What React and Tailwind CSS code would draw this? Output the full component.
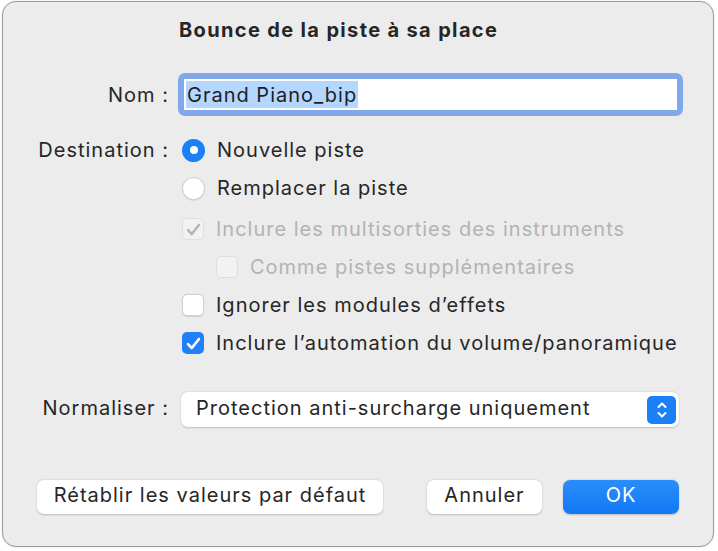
import React from "react";

const font = { fontFamily: "Inter, 'Liberation Sans', sans-serif" };

const Radio = ({ checked }) =>
  checked ? (
    <span className="flex h-[23px] w-[23px] shrink-0 items-center justify-center rounded-full bg-[#1b7ff6]">
      <span className="h-[8px] w-[8px] rounded-full bg-white" />
    </span>
  ) : (
    <span className="h-[23px] w-[23px] shrink-0 rounded-full border border-[#cfcfcf] bg-white shadow-[0_0.5px_1px_rgba(0,0,0,0.12)]" />
  );

const Check = ({ color }) => (
  <svg width="15" height="13" viewBox="0 0 15 13" fill="none">
    <path d="M2 7.2 L5.8 11 L13 2" stroke={color} strokeWidth="2.6" strokeLinecap="round" strokeLinejoin="round" />
  </svg>
);

const Checkbox = ({ checked, disabled }) => {
  if (checked && !disabled)
    return (
      <span className="flex h-[22px] w-[22px] shrink-0 items-center justify-center rounded-[5px] bg-[#1f80f7]">
        <Check color="#fff" />
      </span>
    );
  if (disabled)
    return (
      <span className="flex h-[22px] w-[22px] shrink-0 items-center justify-center rounded-[5px] border border-[#dedede] bg-[#f2f2f2]">
        {checked ? <Check color="#b5b5b5" /> : null}
      </span>
    );
  return <span className="h-[22px] w-[22px] shrink-0 rounded-[5px] border border-[#cfcfcf] bg-white shadow-[0_0.5px_1px_rgba(0,0,0,0.12)]" />;
};

const Option = ({ control, label, disabled, indent }) => (
  <div className={`flex h-[38px] items-center gap-[12px] ${indent ? "pl-[48px]" : "pl-[14px]"}`}>
    {control}
    <span className={`text-[20px] leading-none ${disabled ? "text-[#b3b3b3]" : "text-[#262626]"}`}>{label}</span>
  </div>
);

export default function App() {
  return (
    <div className="h-[551px] w-[718px] bg-white pl-[2px] pt-[1px] tracking-[1px]" style={font}>
      <div className="flex h-[546px] w-[712px] flex-col rounded-[14px] border border-[#9c9c9c] bg-[#ececec] shadow-[0_0_2px_rgba(0,0,0,0.15)]">
        <h1 className="pl-[176px] pt-[16px] text-[20px] font-bold leading-[24px] tracking-[1.35px] text-[#262626]">
          Bounce de la piste à sa place
        </h1>

        <div className="mt-[31px] flex items-center">
          <span className="w-[166px] text-right text-[20px] text-[#262626]">Nom :</span>
          <div className="ml-[9px] w-[505px] rounded-[7px] bg-[#82a8ec] p-[6px]">
            <div className="flex h-[31px] items-center bg-white pl-[2px]">
              <span className="flex h-[27px] items-center bg-[#b3d7ff] pl-[1px] pr-[1px] text-[20px] text-[#1e1e1e]">
                Grand Piano_bip
              </span>
            </div>
          </div>
        </div>

        <div className="mt-[15px] flex">
          <span className="flex h-[38px] w-[166px] items-center justify-end text-[20px] text-[#262626]">
            Destination :
          </span>
          <div className="-ml-[1px] flex flex-col">
            <Option control={<Radio checked />} label="Nouvelle piste" />
            <Option control={<Radio />} label="Remplacer la piste" />
            <div className="mt-[3px]">
              <Option control={<Checkbox checked disabled />} label="Inclure les multisorties des instruments" disabled />
              <Option control={<Checkbox disabled />} label="Comme pistes supplémentaires" disabled indent />
              <Option control={<Checkbox />} label="Ignorer les modules d’effets" />
              <Option control={<Checkbox checked />} label="Inclure l’automation du volume/panoramique" />
            </div>
          </div>
        </div>

        <div className="mt-[30px] flex items-center">
          <span className="w-[166px] pb-[3px] text-right text-[20px] text-[#262626]">Normaliser :</span>
          <div className="ml-[12px] flex h-[35px] w-[498px] items-center justify-between rounded-[7px] bg-white pl-[15px] pr-[3px] shadow-[0_0.5px_2px_rgba(0,0,0,0.2)]">
            <span className="pb-[3px] text-[20px] text-[#262626]">Protection anti-surcharge uniquement</span>
            <span className="flex h-[28px] w-[29px] items-center justify-center rounded-[5px] bg-[#1b7ff6]">
              <svg width="12" height="20" viewBox="0 0 12 20" fill="none">
                <path d="M2.5 7 L6 3.5 L9.5 7" stroke="#fff" strokeWidth="2" strokeLinecap="round" strokeLinejoin="round" />
                <path d="M2.5 13 L6 16.5 L9.5 13" stroke="#fff" strokeWidth="2" strokeLinecap="round" strokeLinejoin="round" />
              </svg>
            </span>
          </div>
        </div>

        <div className="mt-[53px] flex items-center px-[34px]">
          <button className="h-[34px] w-[346px] rounded-[7px] bg-white pb-[4px] text-[20px] text-[#262626] shadow-[0_0.5px_2px_rgba(0,0,0,0.22)]">
            Rétablir les valeurs par défaut
          </button>
          <button className="ml-auto h-[34px] w-[115px] rounded-[7px] bg-white pb-[4px] text-[20px] text-[#262626] shadow-[0_0.5px_2px_rgba(0,0,0,0.22)]">
            Annuler
          </button>
          <button className="ml-[21px] h-[34px] w-[116px] rounded-[7px] bg-gradient-to-b from-[#2a8dfc] to-[#1079f5] pb-[4px] text-[20px] text-white shadow-[0_0.5px_2px_rgba(0,0,0,0.22)]">
            OK
          </button>
        </div>
      </div>
    </div>
  );
}
